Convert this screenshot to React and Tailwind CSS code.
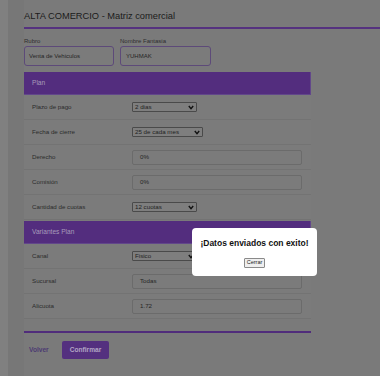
import React from "react";

const font = { fontFamily: '"Liberation Sans", Arial, sans-serif' };

function Chevron() {
  return (
    <svg width="6" height="5" viewBox="0 0 6 5" className="shrink-0">
      <path d="M0.8 1 L3 3.6 L5.2 1" fill="none" stroke="#111" strokeWidth="1.4" />
    </svg>
  );
}

function Select({ value, w }) {
  return (
    <div
      className={`h-[10px] ${w} flex items-center justify-between border border-[#4a4a4a] bg-[#7e7e7e] rounded-[1px] pl-[2px] pr-[2px] text-[6.2px] leading-none text-[#1e1e1e]`}
    >
      <span>{value}</span>
      <Chevron />
    </div>
  );
}

function Input({ value }) {
  return (
    <div className="h-[15px] w-[170px] flex items-center border border-[#6b6b6b] bg-[#7b7b7b] rounded-[2px] pl-[7px] text-[6.2px] leading-none text-[#262626]">
      {value}
    </div>
  );
}

function Row({ label, children }) {
  return (
    <div className="h-[25px] flex items-center border-b border-[#737373] bg-[#7b7b7b] pl-[8px]">
      <div className="w-[100px] text-[6.2px] leading-none text-[#2b2b2b]">{label}</div>
      {children}
    </div>
  );
}

function Header({ title, extra = "" }) {
  return (
    <div
      className={`h-[23px] flex items-center bg-[#532d7e] border-r border-b border-[#62478a] pl-[8px] text-[6.6px] leading-none text-[#a79bba] ${extra}`}
    >
      {title}
    </div>
  );
}

export default function App() {
  return (
    <div className="relative w-[380px] h-[376px] overflow-hidden bg-[#7a7a7a] flex" style={font}>
      <div className="w-[8px] bg-[#808080]" />
      <div className="w-[16px] bg-[#777777]" />
      <div className="flex-1 flex flex-col">
        <div className="mt-[10px] h-[12px] leading-[12px] text-[9.3px] text-[#1a1a1a]">
          ALTA COMERCIO - Matriz comercial
        </div>
        <div className="mt-[5px] h-[2px] bg-[#55327f]" />
        <div className="w-[287px] flex flex-col">
          <div className="mt-[8px] flex gap-[6px]">
            <div className="flex flex-col w-[90px]">
              <div className="h-[8px] leading-[8px] text-[6px] text-[#2e2e2e]">Rubro</div>
              <div className="mt-[1px] h-[20px] flex items-center border border-[#5d4a79] rounded-[3px] bg-[#7b7b7b] pl-[4px] text-[6px] leading-none text-[#262626]">
                Venta de Vehiculos
              </div>
            </div>
            <div className="flex flex-col w-[91px]">
              <div className="h-[8px] leading-[8px] text-[6px] text-[#2e2e2e]">Nombre Fantasia</div>
              <div className="mt-[1px] h-[20px] flex items-center border border-[#5d4a79] rounded-[3px] bg-[#7b7b7b] pl-[5px] text-[6px] leading-none text-[#262626]">
                YUHMAK
              </div>
            </div>
          </div>
          <Header title="Plan" extra="mt-[6px]" />
          <Row label="Plazo de pago">
            <Select value="2 dias" w="w-[65px]" />
          </Row>
          <Row label="Fecha de cierre">
            <Select value="25 de cada mes" w="w-[71px]" />
          </Row>
          <Row label="Derecho">
            <Input value="0%" />
          </Row>
          <Row label="Comisión">
            <Input value="0%" />
          </Row>
          <Row label="Cantidad de cuotas">
            <Select value="12 cuotas" w="w-[65px]" />
          </Row>
          <Header title="Variantes Plan" extra="mt-[1px]" />
          <Row label="Canal">
            <Select value="Fisico" w="w-[65px]" />
          </Row>
          <Row label="Sucursal">
            <Input value="Todas" />
          </Row>
          <Row label="Alicuota">
            <Input value="1.72" />
          </Row>
          <div className="mt-[12px] h-[2px] bg-[#502c7b]" />
          <div className="mt-[8px] flex items-center">
            <div className="w-[38px] pl-[5px] text-[6.6px] font-bold text-[#4d3a72] leading-none">Volver</div>
            <div className="h-[18px] w-[47px] flex items-center justify-center bg-[#54307f] rounded-[2px] text-[6.6px] font-bold text-[#b2a5c4] leading-none">
              Confirmar
            </div>
          </div>
        </div>
      </div>

      <div className="absolute left-[192px] top-[228px] w-[125px] h-[48px] bg-white rounded-[4px] flex flex-col items-center">
        <div className="mt-[10px] text-[8.5px] font-bold text-[#111] leading-[10px]">¡Datos enviados con exito!</div>
        <div className="mt-[10px] h-[10px] px-[2px] flex items-center border border-[#8a8a8a] bg-[#efefef] rounded-[1px] text-[5.5px] leading-none text-[#222]">
          Cerrar
        </div>
      </div>
    </div>
  );
}
